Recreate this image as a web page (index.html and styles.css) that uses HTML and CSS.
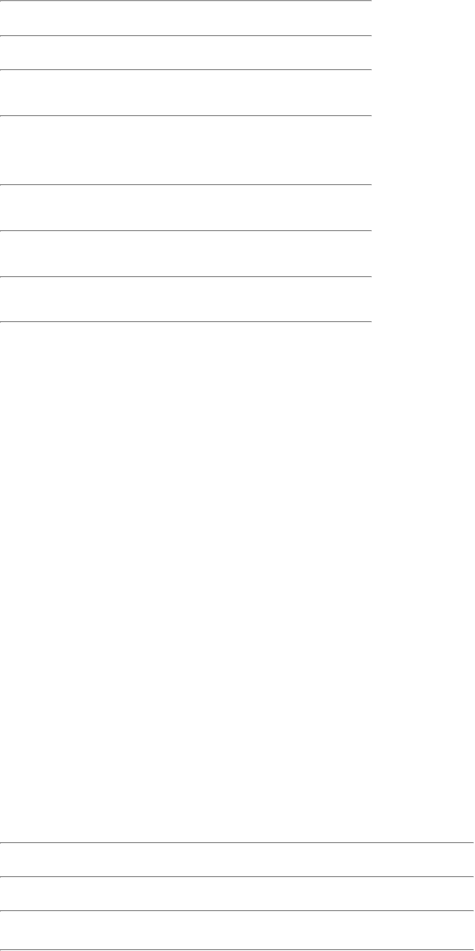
FILE: index.html
```html
<!DOCTYPE html>
<html>
<head>
  <link rel="stylesheet" href="styles.css">
  <title>Liste</title>
</head>
<body>
  <div class="page">
    <div class="list top">
      <hr>
      <div class="item h33"></div>
      <hr>
      <div class="item h32"></div>
      <hr>
      <div class="item h44"></div>
      <hr>
      <div class="item h67"></div>
      <hr>
      <div class="item h44"></div>
      <hr>
      <div class="item h44"></div>
      <hr>
      <div class="item h43"></div>
      <hr>
    </div>

    <div class="list bottom">
      <hr>
      <div class="item h32"></div>
      <hr>
      <div class="item h32"></div>
      <hr>
      <div class="item h37"></div>
      <hr>
    </div>
  </div>
</body>
</html>
```

FILE: styles.css
```css
html, body {
  margin: 0;
  padding: 0;
  background-color: #fff;
  font-family: "Liberation Sans", Arial, sans-serif;
}

.page {
  display: flex;
  flex-direction: column;
  height: 951px;
}

.list {
  display: flex;
  flex-direction: column;
}

.top {
  width: 372px;
}

.bottom {
  width: 474px;
  margin-top: auto;
}

hr {
  margin: 0;
  height: 0;
  border-style: inset;
  border-width: 1px;
  color: gray;
}

.h32 { height: 32px; }
.h33 { height: 33px; }
.h37 { height: 37px; }
.h43 { height: 43px; }
.h44 { height: 44px; }
.h67 { height: 67px; }
```
